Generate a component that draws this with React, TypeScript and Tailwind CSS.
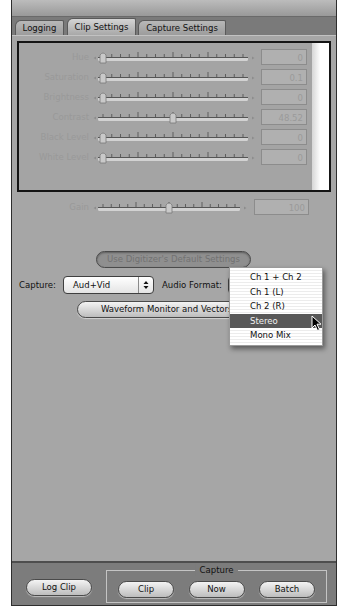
const font = { fontFamily: '"DejaVu Sans Condensed", "DejaVu Sans", "Liberation Sans", sans-serif' };

function Slider({ width, thumb }: { width: number; thumb: number }) {
  const ticks: JSX.Element[] = [];
  for (let i = 0; i <= 16; i++) {
    const x = 6 + ((width - 12) * i) / 16;
    const big = i % 4 === 0 && i > 0 && i < 16;
    ticks.push(
      <line key={i} x1={x} x2={x} y1={big ? 2 : 4} y2={7} stroke="#5e5e5e" strokeWidth={1} />
    );
  }
  const tx = 6 + (width - 12) * thumb;
  return (
    <svg width={width + 10} height={14} className="block">
      <path d="M3 9.5 L0.5 8 L3 6.5 Z" fill="#8e8e8e" />
      <path d={`M${width + 7} 9.5 L${width + 9.5} 8 L${width + 7} 6.5 Z`} fill="#8e8e8e" />
      <g transform="translate(4,0)">
        {ticks}
        <rect x={1} y={7} width={width - 2} height={4} fill="#d2d2d2" rx={1.5} />
        <line x1={1} x2={width - 1} y1={7.5} y2={7.5} stroke="#555" strokeWidth={1} />
        <path
          d={`M${tx - 3} 13 L${tx - 3} 5 Q${tx} 1 ${tx + 3} 5 L${tx + 3} 13 Z`}
          fill="#c9c9c9"
          stroke="#7a7a7a"
          strokeWidth={0.8}
        />
      </g>
    </svg>
  );
}

function Row({ label, value, thumb }: { label: string; value: string; thumb: number }) {
  return (
    <div className="flex items-center h-[20px]">
      <div className="w-[74px] text-right pr-[4px] text-[9.5px] text-[#999999]">{label}</div>
      <Slider width={152} thumb={thumb} />
      <div className="ml-[6px] w-[46px] h-[16px] border border-[#8c8c8c] bg-[#b0b0b0] text-right pr-[3px] text-[9.5px] leading-[15px] text-[#9a9a9a]">
        {value}
      </div>
    </div>
  );
}

function Pill({ children, className = "" }: { children: React.ReactNode; className?: string }) {
  return (
    <div
      className={`h-[17px] rounded-full border border-[#4a4a4a] bg-gradient-to-b from-[#f4f4f4] via-[#d8d8d8] to-[#bdbdbd] shadow-[0_1px_1px_rgba(255,255,255,0.5)] flex items-center justify-center text-[9.5px] text-[#111] ${className}`}
    >
      {children}
    </div>
  );
}

export default function App() {
  return (
    <div className="relative w-[342px] h-[616px] bg-white overflow-hidden" style={font}>
      <div className="ml-[11px] w-[326px] h-[606px] border-l border-r border-b border-[#2e2e2e] flex flex-col">
        <div className="h-[17px] bg-gradient-to-b from-[#bcbcbc] to-[#999999] border-b border-[#6a6a6a]" />
        <div className="h-[18px] bg-[#7a7a7a] flex items-end pl-[3px]">
          <div className="h-[15px] w-[49px] mr-[3px] border border-b-0 border-[#5a5a5a] rounded-tl-[6px] rounded-tr-[2px] bg-gradient-to-b from-[#b8b8b8] to-[#9c9c9c] text-[9.5px] text-[#111] flex items-center justify-center">
            Logging
          </div>
          <div className="h-[17px] w-[69px] mr-[2px] border border-b-0 border-[#5a5a5a] rounded-tl-[6px] rounded-tr-[2px] bg-gradient-to-b from-[#d4d4d4] to-[#a8a8a8] text-[9.5px] text-[#111] flex items-center justify-center">
            Clip Settings
          </div>
          <div className="h-[15px] w-[88px] border border-b-0 border-[#5a5a5a] rounded-tl-[6px] rounded-tr-[2px] bg-gradient-to-b from-[#b8b8b8] to-[#9c9c9c] text-[9.5px] text-[#111] flex items-center justify-center">
            Capture Settings
          </div>
        </div>
        <div className="flex-1 bg-[#a6a6a6] border-t border-[#c2c2c2] flex flex-col">
          <div className="mt-[5px] mx-[5px] h-[151px] border-2 border-[#151515] flex bg-[#a4a4a4]">
            <div className="flex-1 pt-[4px] flex flex-col">
              <Row label="Hue" value="0" thumb={0} />
              <Row label="Saturation" value="0.1" thumb={0} />
              <Row label="Brightness" value="0" thumb={0} />
              <Row label="Contrast" value="48.52" thumb={0.5} />
              <Row label="Black Level" value="0" thumb={0} />
              <Row label="White Level" value="0" thumb={0} />
            </div>
            <div className="w-[17px] bg-gradient-to-r from-[#d6d6d6] via-[#ffffff] to-[#ffffff]" />
          </div>
          <div className="flex items-center h-[20px] mt-[5px] pl-[7px]">
            <div className="w-[74px] text-right pr-[4px] text-[9.5px] text-[#999999]">Gain</div>
            <Slider width={144} thumb={0.5} />
            <div className="ml-[7px] w-[55px] h-[16px] border border-[#8c8c8c] bg-[#b0b0b0] text-right pr-[3px] text-[9.5px] leading-[15px] text-[#9a9a9a]">
              100
            </div>
          </div>
          <div className="mt-[34px] pl-[84px]">
            <div className="w-[155px] h-[17px] rounded-full border border-[#4a4a4a] bg-[#8f8f8f] shadow-[inset_0_1px_2px_rgba(0,0,0,0.35)] flex items-center justify-center text-[9.5px] text-[#727272]">
              Use Digitizer's Default Settings
            </div>
          </div>
          <div className="mt-[8px] flex items-center h-[18px] pl-[7px] text-[9.5px] text-[#111]">
            <span className="w-[44px]">Capture:</span>
            <div className="w-[91px] h-[18px] rounded-[4px] border border-[#3f3f3f] bg-gradient-to-b from-[#ffffff] to-[#e4e4e4] flex">
              <div className="flex-1 pl-[9px] leading-[16px]">Aud+Vid</div>
              <div className="w-[15px] border-l border-[#8a8a8a] flex flex-col items-center justify-center gap-[2px]">
                <svg width="6" height="10" viewBox="0 0 6 10">
                  <path d="M0.5 4 L3 1 L5.5 4 Z M0.5 6 L3 9 L5.5 6 Z" fill="#111" />
                </svg>
              </div>
            </div>
            <span className="ml-[8px]">Audio Format:</span>
            <div className="ml-[6px] w-[93px] h-[18px] rounded-[4px] border border-[#3f3f3f] bg-[#e4e4e4]" />
          </div>
          <div className="mt-[7px] pl-[65px]">
            <Pill className="w-[200px]">Waveform Monitor and Vectorscope</Pill>
          </div>
        </div>
        <div className="h-[44px] bg-[#7c7c7c] border-t-2 border-[#4e4e4e] flex items-center pl-[14px]">
          <Pill className="w-[66px] mt-[6px]">Log Clip</Pill>
          <div className="relative ml-[14px] mt-[5px] w-[221px] h-[33px] border border-[#c4c4c4] flex items-center justify-between px-[11px] pt-[5px]">
            <div className="absolute -top-[7px] left-1/2 -translate-x-1/2 bg-[#7c7c7c] px-[5px] text-[9.5px] text-[#111] leading-[12px]">
              Capture
            </div>
            <Pill className="w-[56px]">Clip</Pill>
            <Pill className="w-[56px]">Now</Pill>
            <Pill className="w-[56px]">Batch</Pill>
          </div>
        </div>
      </div>

      <div className="absolute left-[229px] top-[267px] w-[94px] h-[79px] border border-[#9a9a9a] bg-[repeating-linear-gradient(180deg,#ffffff_0px,#ffffff_2px,#ececec_2px,#ececec_3px)] shadow-[2px_3px_5px_rgba(0,0,0,0.45)] py-[2px] text-[9.5px] text-[#111]">
        <div className="h-[14.5px] pl-[20px] leading-[14px]">Ch 1 + Ch 2</div>
        <div className="h-[14.5px] pl-[20px] leading-[14px]">Ch 1 (L)</div>
        <div className="h-[14.5px] pl-[20px] leading-[14px]">Ch 2 (R)</div>
        <div className="h-[14.5px] pl-[20px] leading-[14px] bg-[#585858] text-[#f0f0f0]">Stereo</div>
        <div className="h-[14.5px] pl-[20px] leading-[14px]">Mono Mix</div>
      </div>
      <svg className="absolute left-[311px] top-[315px]" width="12" height="17" viewBox="0 0 12 17">
        <path d="M1 1 L1 13 L4 10 L6.5 15.5 L8.5 14.5 L6 9.2 L10 9.2 Z" fill="#000" stroke="#fff" strokeWidth={1} />
      </svg>
    </div>
  );
}
